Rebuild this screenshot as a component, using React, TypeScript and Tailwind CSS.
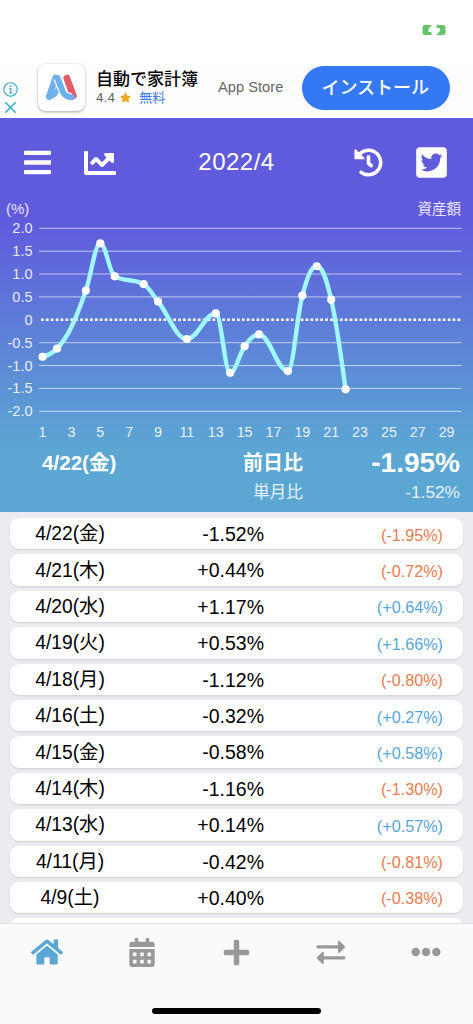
import {
  FaBars,
  FaCalendarAlt,
  FaChartLine,
  FaEllipsisH,
  FaHistory,
  FaHome,
  FaPlus,
  FaStar,
  FaTwitterSquare,
} from "react-icons/fa";

type Point = { day: number; value: number };

const points: Point[] = [
  { day: 1, value: -0.81 },
  { day: 2, value: -0.63 },
  { day: 4, value: 0.64 },
  { day: 5, value: 1.67 },
  { day: 6, value: 0.95 },
  { day: 8, value: 0.78 },
  { day: 9, value: 0.4 },
  { day: 11, value: -0.42 },
  { day: 13, value: 0.14 },
  { day: 14, value: -1.16 },
  { day: 15, value: -0.58 },
  { day: 16, value: -0.32 },
  { day: 18, value: -1.12 },
  { day: 19, value: 0.53 },
  { day: 20, value: 1.17 },
  { day: 21, value: 0.44 },
  { day: 22, value: -1.52 },
];

const rows = [
  { date: "4/22(金)", total: "-1.52%", change: "-1.95%" },
  { date: "4/21(木)", total: "+0.44%", change: "-0.72%" },
  { date: "4/20(水)", total: "+1.17%", change: "+0.64%" },
  { date: "4/19(火)", total: "+0.53%", change: "+1.66%" },
  { date: "4/18(月)", total: "-1.12%", change: "-0.80%" },
  { date: "4/16(土)", total: "-0.32%", change: "+0.27%" },
  { date: "4/15(金)", total: "-0.58%", change: "+0.58%" },
  { date: "4/14(木)", total: "-1.16%", change: "-1.30%" },
  { date: "4/13(水)", total: "+0.14%", change: "+0.57%" },
  { date: "4/11(月)", total: "-0.42%", change: "-0.81%" },
  { date: "4/9(土)", total: "+0.40%", change: "-0.38%" },
];

const levels = [2, 1.5, 1, 0.5, 0, -0.5, -1, -1.5, -2];
const days = [1, 3, 5, 7, 9, 11, 13, 15, 17, 19, 21, 23, 25, 27, 29];

const toX = (day: number) => 42.6 + (day - 1) * 14.43;
const toY = (value: number) => 99.8 - value * 45.75;

// Monotone cubic through all points, so the line never overshoots a value
function buildCurve(data: Point[]) {
  const xy = data.map((p) => ({ x: toX(p.day), y: toY(p.value) }));
  const last = xy.length - 1;
  const slope = (i: number) => (xy[i + 1].y - xy[i].y) / (xy[i + 1].x - xy[i].x);

  const inner = (i: number) => {
    const h0 = xy[i].x - xy[i - 1].x;
    const h1 = xy[i + 1].x - xy[i].x;
    const s0 = slope(i - 1);
    const s1 = slope(i);
    const p = (s0 * h1 + s1 * h0) / (h0 + h1);
    return (Math.sign(s0) + Math.sign(s1)) * Math.min(Math.abs(s0), Math.abs(s1), Math.abs(p) / 2);
  };
  const tangent = (i: number) => {
    if (i === 0) return (3 * slope(0) - inner(1)) / 2;
    if (i === last) return (3 * slope(last - 1) - inner(last - 1)) / 2;
    return inner(i);
  };

  let d = `M${xy[0].x} ${xy[0].y}`;
  for (let i = 1; i <= last; i++) {
    const a = xy[i - 1];
    const b = xy[i];
    // slightly longer handles than a third, for rounder peaks
    const dx = (b.x - a.x) * 0.38;
    d += ` C${a.x + dx} ${a.y + dx * tangent(i - 1)} ${b.x - dx} ${b.y - dx * tangent(i)} ${b.x} ${b.y}`;
  }
  return d;
}

function AdBanner() {
  return (
    <div className="flex h-[58px] items-center bg-[#fefefe]">
      <div className="flex w-[38px] flex-col gap-[4px] pl-[3px] pt-[18px]">
        <svg width="15" height="15" viewBox="0 0 15 15" fill="none" stroke="#36a9c9">
          <circle cx="7.5" cy="7.5" r="6.7" strokeWidth="1.1" />
          <path d="M6.2 6.5h1.6v4.4M6 11h3.4" strokeWidth="1.2" />
          <circle cx="7.5" cy="4.2" r="0.6" fill="#36a9c9" stroke="none" />
          <circle cx="7.5" cy="4.2" r="0.4" />
        </svg>
        <svg width="15" height="13" viewBox="0 0 15 13" stroke="#36a9c9" strokeWidth="1.5">
          <path d="M2.2 1.2l10.6 10.6M12.8 1.2L2.2 11.8" />
        </svg>
      </div>
      <div className="-mt-1 flex size-[47px] items-center justify-center rounded-lg bg-white shadow-[0_1px_3px_rgba(0,0,0,0.35)]">
        <svg width="33" height="27" viewBox="0 0 33 27" fill="none" strokeLinecap="round">
          <path d="M21.8 4.1L28.3 21.7" stroke="#e45a68" strokeWidth="6.8" />
          <path d="M10.6 3.6L4 22.7" stroke="#6eb1ea" strokeWidth="6.2" />
          <path d="M4 23.2C9.5 22 12 18.5 14.4 12.5" stroke="#6eb1ea" strokeWidth="5" />
          <path d="M12.5 4.2L17.8 17.7Q20.2 23.4 26.8 23.3" stroke="#fff" strokeWidth="8.4" strokeLinecap="butt" />
          <path d="M12.5 4.2L17.8 17.7Q20.2 23.4 26.8 23.3" stroke="#6eb1ea" strokeWidth="6" />
        </svg>
      </div>
      <div className="-mt-[4px] ml-[11px] w-[122px] whitespace-nowrap">
        <div className="text-[17px] leading-[21px] font-medium text-black">自動で家計簿</div>
        <div className="flex h-[16px] items-center font-['Roboto','Noto_Sans_CJK_JP',sans-serif] text-[13px] leading-4 text-[#666]">
          <span className="tracking-[0.4px]">4.4</span>
          <FaStar className="ml-[5px] size-[11px] text-[#edaa27]" />
          <span className="ml-[8px] text-[#3b7af0]">無料</span>
        </div>
      </div>
      <span className="w-[84px] pb-[4px] text-[14.7px] whitespace-nowrap text-[#666]">App Store</span>
      <button className="-mt-[2px] flex h-11 w-[147.5px] items-center justify-center rounded-full bg-[#3478f3] pr-px text-[18px] font-medium text-white">
        インストール
      </button>
    </div>
  );
}

function Chart() {
  return (
    <svg className="block" width="473" height="222" viewBox="0 0 473 222">
      {levels.map((level) => (
        <g key={level}>
          <text x="32.5" y={toY(level) + 5} textAnchor="end" fontSize="14.5" fill="#fff" fillOpacity="0.88">
            {level === 0 ? "0" : level.toFixed(1)}
          </text>
          {level === 0 ? (
            <path
              d={`M41 ${toY(0)}H461`}
              stroke="#fff"
              strokeWidth="2.4"
              strokeDasharray="2.7 2.2"
            />
          ) : (
            <path d={`M39 ${toY(level)}H461.5`} stroke="#fff" strokeOpacity="0.62" />
          )}
        </g>
      ))}
      {days.map((day) => (
        <text key={day} x={toX(day)} y="217" textAnchor="middle" fontSize="14.3" fill="#fff" fillOpacity="0.88">
          {day}
        </text>
      ))}
      <path d={buildCurve(points)} fill="none" stroke="#a1faff" strokeWidth="4.4" strokeLinejoin="round" />
      {points.map((p) => (
        <circle key={p.day} cx={toX(p.day)} cy={toY(p.value)} r="4.1" fill="#fff" />
      ))}
    </svg>
  );
}

function Summary() {
  return (
    <div className="flex h-[394px] flex-col bg-[linear-gradient(180deg,#605adc_0px,#605adc_100px,#5ba6d3_330px)] text-white">
      <div className="flex h-[81px] items-center pt-[8px]">
        <div className="flex w-[173px] items-center pl-6">
          <FaBars className="h-[31px] w-[27px]" />
          <FaChartLine className="ml-[33px] size-8" />
        </div>
        <h1 className="w-[127px] pb-[2px] text-center text-[24px] tracking-[0.5px]">2022/4</h1>
        <div className="flex flex-1 items-center pl-[54px]">
          <FaHistory className="size-[29px]" />
          <FaTwitterSquare className="ml-[31px] h-[35px] w-[35px]" />
        </div>
      </div>
      <div className="mb-px flex h-[20px] items-center justify-between pr-[12px] pl-[6px] text-[15px] leading-5 text-white/85">
        <span>(%)</span>
        <span className="text-[14.5px]">資産額</span>
      </div>
      <Chart />
      <div className="flex h-[42px] items-center pr-[13px] text-[20px] font-bold">
        <span className="w-[150px] pl-[42px] text-[20.6px] whitespace-nowrap">4/22(金)</span>
        <span className="w-[153px] text-right">前日比</span>
        <span className="flex-1 text-right text-[28px]">-1.95%</span>
      </div>
      <div className="flex h-[18px] items-center pr-[13px] text-[16.7px] text-white/85">
        <span className="w-[303px] text-right">単月比</span>
        <span className="flex-1 text-right text-[17.3px]">-1.52%</span>
      </div>
    </div>
  );
}

function ExchangeIcon() {
  return (
    <svg width="30" height="24" viewBox="0 0 30 24" fill="currentColor">
      <path d="M1.8 5.2H22V1.6q0-1.8 1.5-.7l5.2 5q1 .9 0 1.8l-5.2 5q-1.5 1.1-1.5-.7V8.4H1.8q-1.4 0-1.4-1.6t1.4-1.6z" />
      <path d="M28 16.2H7.8v-3.6q0-1.8-1.5-.7l-5.2 5q-1 .9 0 1.8l5.2 5q1.5 1.1 1.5-.7v-3.6H28q1.4 0 1.4-1.6T28 16.2z" />
    </svg>
  );
}

function TabBar() {
  return (
    <nav className="flex h-[101px] flex-col border-t border-[#e0e0e0] bg-[#fafafa] text-[#999]">
      <div className="grid h-[56px] grid-cols-5 place-items-center">
        <FaHome className="size-8 text-[#5ba6d3]" />
        <FaCalendarAlt className="h-[29px] w-[26px]" />
        <FaPlus className="size-[29px]" />
        <ExchangeIcon />
        <FaEllipsisH className="size-[30px]" />
      </div>
      <div className="mx-auto mt-[28px] h-[6px] w-[169px] rounded-full bg-black" />
    </nav>
  );
}

export default function App() {
  return (
    <div className="flex h-[1024px] w-[473px] flex-col overflow-hidden bg-[#ebecef] font-['Liberation_Sans','Noto_Sans_CJK_JP',sans-serif]">
      <div className="flex h-[60px] justify-end bg-white pt-[25px] pr-[27px]">
        <svg width="24" height="10" viewBox="0 0 24 10" fill="#65c466">
          <path d="M3 0h6.500Q8.500 1.800 7 3Q5.300 5.500 7 7H9.500V10H3Q.5 10 .5 7.500v-5Q.5 0 3 0z" />
          <path d="M14.500 0H21q2.500 0 2.500 2.500v5Q23.500 10 21 10h-6.500Q15.800 8.200 17.300 7Q19 4.800 17.300 3H14.500z" />
        </svg>
      </div>
      <AdBanner />
      <Summary />
      <main className="flex min-h-0 flex-1 flex-col gap-[5px] overflow-hidden px-[10px] pt-[6px]">
        {rows.map((row) => (
          <div
            key={row.date}
            className="flex h-[31.4px] shrink-0 items-center rounded-[9px] bg-white pt-[2px] pr-[20px] text-[19.5px] text-black shadow-[0_1px_2px_rgba(0,0,0,0.12)]"
          >
            <span className="w-[120px] text-center text-[19.3px]">{row.date}</span>
            <span className="w-[134px] text-right">{row.total}</span>
            <span
              className={`flex-1 text-right text-[16.2px] ${
                row.change.startsWith("-") ? "text-[#ea7b50]" : "text-[#58a5d7]"
              }`}
            >
              ({row.change})
            </span>
          </div>
        ))}
        {/* top edge of the next row, scrolled under the tab bar */}
        <div className="h-[31.4px] shrink-0 rounded-[9px] bg-white" />
      </main>
      <TabBar />
    </div>
  );
}
